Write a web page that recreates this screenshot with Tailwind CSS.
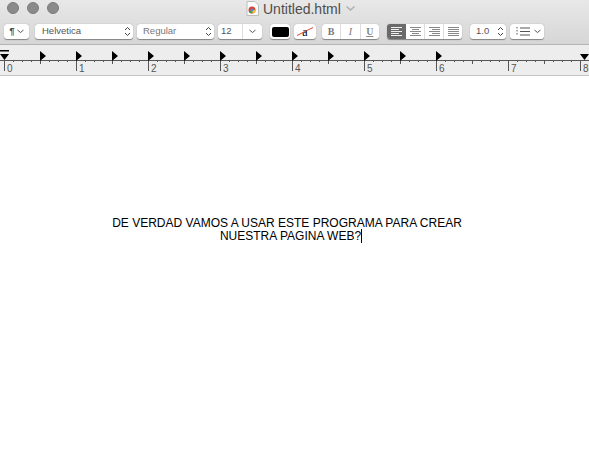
<!DOCTYPE html>
<html lang="en">
<head>
    <meta charset="UTF-8">
    <title>Untitled.html</title>
    <script src="https://cdn.jsdelivr.net/npm/@tailwindcss/browser@4"></script>
</head>
<body class="bg-white font-['Liberation_Sans',Arial,sans-serif] w-[589px] h-[473px] overflow-hidden">

    <!-- Title bar + format bar -->
    <div class="h-[45px] bg-gradient-to-b from-[#e8e8e8] to-[#d6d6d6] border-b border-[#b4b4b4] flex flex-col">
        <div class="h-[16px] relative flex items-center">
            <div class="flex gap-2 pl-[7px]">
                <span class="w-3 h-3 rounded-full bg-[#8a8a8a] border border-[#7c7c7c]"></span>
                <span class="w-3 h-3 rounded-full bg-[#8a8a8a] border border-[#7c7c7c]"></span>
                <span class="w-3 h-3 rounded-full bg-[#8a8a8a] border border-[#7c7c7c]"></span>
            </div>
            <div class="absolute left-[246px] top-0 h-[17px] flex items-center">
                <svg width="13" height="15" viewBox="0 0 13 15">
                    <path d="M1 .5h8l3.500 3.500V14.500H1z" fill="#fbfbfb" stroke="#bdbdbd"/>
                    <circle cx="6" cy="9" r="3.500" fill="#d9432f"/>
                    <path d="M6 9L3 10.800a3.500 3.500 0 0 0 3.500 1.700z" fill="#3ba54a"/>
                    <path d="M6 9L9.500 9a3.500 3.500 0 0 1-3 3.500z" fill="#f3c32c"/>
                    <circle cx="6" cy="9" r="1.500" fill="#4a8fe0"/>
                </svg>
                <span class="ml-[4px] text-[14px] text-[#4e4e4e] leading-none">Untitled.html</span>
                <svg class="ml-[5px]" width="9" height="5" viewBox="0 0 9 5"><path d="M.5.500l4 3.500 4-3.500" fill="none" stroke="#b0b0b0" stroke-width="1.500"/></svg>
            </div>
        </div>

        <div class="mt-[8px] h-[15px] flex items-stretch text-[9.500px] text-[#555] pl-[4px]">
            <div class="w-[25px] bg-white rounded-[3px] shadow-[0_0.500px_1px_rgba(0,0,0,.4)] flex items-center justify-center gap-[2px]">
                <span class="text-[9px] font-bold text-[#444]">¶</span>
                <svg width="7" height="5" viewBox="0 0 7 5"><path d="M.5 1l3 2.500 3-2.500" fill="none" stroke="#555"/></svg>
            </div>
            <div class="ml-[6px] w-[98px] bg-white rounded-[3px] shadow-[0_0.500px_1px_rgba(0,0,0,.4)] flex items-center justify-between pl-[7px] pr-[2px]">
                <span>Helvetica</span>
                <svg width="7" height="11" viewBox="0 0 7 11"><path d="M1 4l2.500-2.500L6 4M1 7l2.500 2.500L6 7" fill="none" stroke="#444"/></svg>
            </div>
            <div class="ml-[4px] w-[77px] bg-white rounded-[3px] shadow-[0_0.500px_1px_rgba(0,0,0,.4)] flex items-center justify-between pl-[6px] pr-[2px] text-[#777]">
                <span>Regular</span>
                <svg width="7" height="11" viewBox="0 0 7 11"><path d="M1 4l2.500-2.500L6 4M1 7l2.500 2.500L6 7" fill="none" stroke="#444"/></svg>
            </div>
            <div class="ml-[4px] w-[44px] bg-white rounded-[3px] shadow-[0_0.500px_1px_rgba(0,0,0,.4)] flex items-center">
                <span class="w-[25px] pl-[3px] border-r border-[#ddd] h-full flex items-center">12</span>
                <svg class="ml-[6px]" width="7" height="5" viewBox="0 0 7 5"><path d="M.5 1l3 2.500 3-2.500" fill="none" stroke="#555"/></svg>
            </div>
            <div class="ml-[8px] w-[20px] bg-white rounded-[3px] shadow-[0_0.500px_1px_rgba(0,0,0,.4)] flex items-center justify-center">
                <span class="w-[17px] h-[10px] rounded-[2px] bg-black"></span>
            </div>
            <div class="ml-[4px] w-[22px] bg-white rounded-[3px] shadow-[0_0.500px_1px_rgba(0,0,0,.4)] flex items-center justify-center relative">
                <svg class="absolute left-[3px] top-[3px]" width="16" height="9" viewBox="0 0 16 9"><path d="M0 8.500L16 .5" stroke="#e0402c"/></svg>
                <span class="relative text-[12px] text-black font-['Liberation_Serif',serif] leading-none">a</span>
            </div>
            <div class="ml-[6px] w-[57px] bg-white rounded-[3px] shadow-[0_0.500px_1px_rgba(0,0,0,.4)] flex font-['Liberation_Serif',serif] text-[10px] text-[#777]">
                <span class="flex-1 flex items-center justify-center font-bold border-r border-[#ddd]">B</span>
                <span class="flex-1 flex items-center justify-center italic border-r border-[#ddd]">I</span>
                <span class="flex-1 flex items-center justify-center underline font-bold text-[#888]">U</span>
            </div>
            <div class="ml-[8px] w-[75px] bg-white rounded-[3px] shadow-[0_0.500px_1px_rgba(0,0,0,.4)] flex overflow-hidden">
                <span class="w-[19px] bg-[#6a6a6a] flex items-center justify-center">
                    <svg width="13" height="9" viewBox="0 0 13 9"><path d="M1 .5h11M1 2.500h8M1 4.500h11M1 6.500h8M1 8.500h11" stroke="#f0f0f0"/></svg>
                </span>
                <span class="w-[19px] border-r border-[#ddd] flex items-center justify-center">
                    <svg width="13" height="9" viewBox="0 0 13 9"><path d="M1 .5h11M3 2.500h7M1 4.500h11M3 6.500h7M1 8.500h11" stroke="#888"/></svg>
                </span>
                <span class="w-[19px] border-r border-[#ddd] flex items-center justify-center">
                    <svg width="13" height="9" viewBox="0 0 13 9"><path d="M1 .5h11M4 2.500h8M1 4.500h11M4 6.500h8M1 8.500h11" stroke="#888"/></svg>
                </span>
                <span class="flex-1 flex items-center justify-center">
                    <svg width="13" height="9" viewBox="0 0 13 9"><path d="M1 .5h11M1 2.500h11M1 4.500h11M1 6.500h11M1 8.500h11" stroke="#888"/></svg>
                </span>
            </div>
            <div class="ml-[8px] w-[36px] bg-white rounded-[3px] shadow-[0_0.500px_1px_rgba(0,0,0,.4)] flex items-center justify-between pl-[6px] pr-[2px]">
                <span>1.0</span>
                <svg width="7" height="11" viewBox="0 0 7 11"><path d="M1 4l2.500-2.500L6 4M1 7l2.500 2.500L6 7" fill="none" stroke="#444"/></svg>
            </div>
            <div class="ml-[4px] w-[34px] bg-white rounded-[3px] shadow-[0_0.500px_1px_rgba(0,0,0,.4)] flex items-center pl-[6px] gap-[4px]">
                <svg width="14" height="9" viewBox="0 0 14 9"><path d="M4 1h10M4 4.500h10M4 8h10" stroke="#555"/><path d="M1 0v9" stroke="#555" stroke-dasharray="1.500 1.500"/></svg>
                <svg width="7" height="5" viewBox="0 0 7 5"><path d="M.5 1l3 2.500 3-2.500" fill="none" stroke="#555"/></svg>
            </div>
        </div>
    </div>

    <!-- Ruler -->
    <div class="h-[31px] bg-[#ededed] border-b border-[#c4c4c4]">
        <svg width="589" height="30" viewBox="0 45 589 30" class="block">
            <path d="M0 60.500H589" stroke="#555"/>
            <g stroke="#555">
                <path d="M4.500 60v11M76.500 60v11M148.500 60v11M220.500 60v11M292.500 60v11M364.500 60v11M436.500 60v11M508.500 60v11M580.500 60v11"/>
                <path d="M40.500 60v4M112.500 60v4M184.500 60v4M256.500 60v4M328.500 60v4M400.500 60v4M472.500 60v4M544.500 60v4"/>
                <path d="M13.500 60v2M22.500 60v2M31.500 60v2M49.500 60v2M58.500 60v2M67.500 60v2M85.500 60v2M94.500 60v2M103.500 60v2M121.500 60v2M130.500 60v2M139.500 60v2M157.500 60v2M166.500 60v2M175.500 60v2M193.500 60v2M202.500 60v2M211.500 60v2M229.500 60v2M238.500 60v2M247.500 60v2M265.500 60v2M274.500 60v2M283.500 60v2M301.500 60v2M310.500 60v2M319.500 60v2M337.500 60v2M346.500 60v2M355.500 60v2M373.500 60v2M382.500 60v2M391.500 60v2M409.500 60v2M418.500 60v2M427.500 60v2M445.500 60v2M454.500 60v2M463.500 60v2M481.500 60v2M490.500 60v2M499.500 60v2M517.500 60v2M526.500 60v2M535.500 60v2M553.500 60v2M562.500 60v2M571.500 60v2"/>
            </g>
            <!-- tab stops -->
            <g fill="#000">
                <path d="M40 51l6 5-6 5zM76 51l6 5-6 5zM112 51l6 5-6 5zM148 51l6 5-6 5zM184 51l6 5-6 5zM220 51l6 5-6 5zM256 51l6 5-6 5zM292 51l6 5-6 5zM328 51l6 5-6 5zM364 51l6 5-6 5zM400 51l6 5-6 5zM436 51l6 5-6 5z"/>
                <path d="M0 50h9v1.500H0zM0 54h9l-4.500 6zM580 54h9l-4.500 6z"/>
            </g>
            <g font-size="10" fill="#555" font-family="'Liberation Sans',sans-serif">
                <text x="7" y="72">0</text>
                <text x="79" y="72">1</text>
                <text x="151" y="72">2</text>
                <text x="223" y="72">3</text>
                <text x="295" y="72">4</text>
                <text x="367" y="72">5</text>
                <text x="439" y="72">6</text>
                <text x="511" y="72">7</text>
                <text x="583" y="72">8</text>
            </g>
        </svg>
    </div>

    <!-- Document -->
    <main class="pt-[139px] pr-[15px] text-center text-[12px] leading-[15px] text-black">
        <p class="translate-y-px">DE VERDAD VAMOS A USAR ESTE PROGRAMA PARA CREAR</p>
        <p class="-mt-px pl-[8px]">NUESTRA PAGINA WEB?<span class="inline-block w-px h-[14px] bg-black align-[-3px]"></span></p>
    </main>
</body>
</html>
